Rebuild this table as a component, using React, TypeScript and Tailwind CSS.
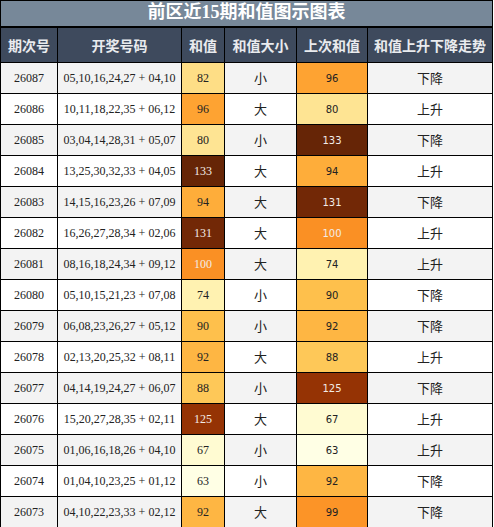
import React from "react";

type Row = {
  period: string;
  nums: string;
  sum: number;
  size: string;
  prev: number;
  trend: string;
};

const rows: Row[] = [
  { period: "26087", nums: "05,10,16,24,27 + 04,10", sum: 82, size: "小", prev: 96, trend: "下降" },
  { period: "26086", nums: "10,11,18,22,35 + 06,12", sum: 96, size: "大", prev: 80, trend: "上升" },
  { period: "26085", nums: "03,04,14,28,31 + 05,07", sum: 80, size: "小", prev: 133, trend: "下降" },
  { period: "26084", nums: "13,25,30,32,33 + 04,05", sum: 133, size: "大", prev: 94, trend: "上升" },
  { period: "26083", nums: "14,15,16,23,26 + 07,09", sum: 94, size: "大", prev: 131, trend: "下降" },
  { period: "26082", nums: "16,26,27,28,34 + 02,06", sum: 131, size: "大", prev: 100, trend: "上升" },
  { period: "26081", nums: "08,16,18,24,34 + 09,12", sum: 100, size: "大", prev: 74, trend: "上升" },
  { period: "26080", nums: "05,10,15,21,23 + 07,08", sum: 74, size: "小", prev: 90, trend: "下降" },
  { period: "26079", nums: "06,08,23,26,27 + 05,12", sum: 90, size: "小", prev: 92, trend: "下降" },
  { period: "26078", nums: "02,13,20,25,32 + 08,11", sum: 92, size: "大", prev: 88, trend: "上升" },
  { period: "26077", nums: "04,14,19,24,27 + 06,07", sum: 88, size: "小", prev: 125, trend: "下降" },
  { period: "26076", nums: "15,20,27,28,35 + 02,11", sum: 125, size: "大", prev: 67, trend: "上升" },
  { period: "26075", nums: "01,06,16,18,26 + 04,10", sum: 67, size: "小", prev: 63, trend: "上升" },
  { period: "26074", nums: "01,04,10,23,25 + 01,12", sum: 63, size: "小", prev: 92, trend: "下降" },
  { period: "26073", nums: "04,10,22,23,33 + 02,12", sum: 92, size: "大", prev: 99, trend: "下降" },
];

// YlOrBr stops
const stops = [
  [255, 255, 229],
  [255, 247, 188],
  [254, 227, 145],
  [254, 196, 79],
  [254, 153, 41],
  [236, 112, 20],
  [204, 76, 2],
  [153, 52, 4],
  [102, 37, 6],
];

const MIN = 63;
const MAX = 133;

function heat(v: number) {
  const t = Math.min(1, Math.max(0, (v - MIN) / (MAX - MIN))) * (stops.length - 1);
  const i = Math.min(stops.length - 2, Math.floor(t));
  const f = t - i;
  const c = stops[i].map((a, k) => Math.round(a + (stops[i + 1][k] - a) * f));
  return `rgb(${c[0]},${c[1]},${c[2]})`;
}

const cols = "grid grid-cols-[57px_124px_43px_72px_71px_125px]";
const cell = "flex items-center justify-center border-r border-b border-black";

const headers = ["期次号", "开奖号码", "和值", "和值大小", "上次和值", "和值上升下降走势"];

export default function App() {
  return (
    <div className="w-[493px] bg-white font-['Liberation_Serif','Noto_Sans_CJK_SC',serif] text-[#222]">
      <div className="border-t border-l border-black">
        {/* title */}
        <div className="flex h-[27px] items-center justify-center border-r border-b-2 border-black bg-[#778899] pb-[2px] text-[18px] font-bold text-white">
          前区近15期和值图示图表
        </div>

        {/* header */}
        <div className={`${cols} h-[35px] bg-[#3e4a5d] font-['Noto_Sans_CJK_SC',sans-serif] text-[14px] font-bold text-[#e9ebee]`}>
          {headers.map((h) => (
            <div key={h} className={`${cell} border-[#1a1f28]`}>
              {h}
            </div>
          ))}
        </div>

        {/* rows */}
        {rows.map((r, i) => {
          const bg = i % 2 === 0 ? "bg-[#f3f3f3]" : "bg-white";
          return (
            <div key={r.period} className={`${cols} h-[31px] text-[12px]`}>
              <div className={`${cell} ${bg}`}>{r.period}</div>
              <div className={`${cell} ${bg}`}>{r.nums}</div>
              <div
                className={`${cell} ${r.sum >= 100 ? "text-[#f3ece6]" : "text-[#222]"}`}
                style={{ backgroundColor: heat(r.sum) }}
              >
                {r.sum}
              </div>
              <div className={`${cell} ${bg} font-['Noto_Sans_CJK_SC',sans-serif] text-[13px]`}>{r.size}</div>
              <div
                className={`${cell} font-['DejaVu_Sans',sans-serif] text-[10px] ${r.prev >= 100 ? "text-[#f3ece6]" : "text-[#222]"}`}
                style={{ backgroundColor: heat(r.prev) }}
              >
                {r.prev}
              </div>
              <div className={`${cell} ${bg} font-['Noto_Sans_CJK_SC',sans-serif] text-[13px]`}>{r.trend}</div>
            </div>
          );
        })}
      </div>
    </div>
  );
}
